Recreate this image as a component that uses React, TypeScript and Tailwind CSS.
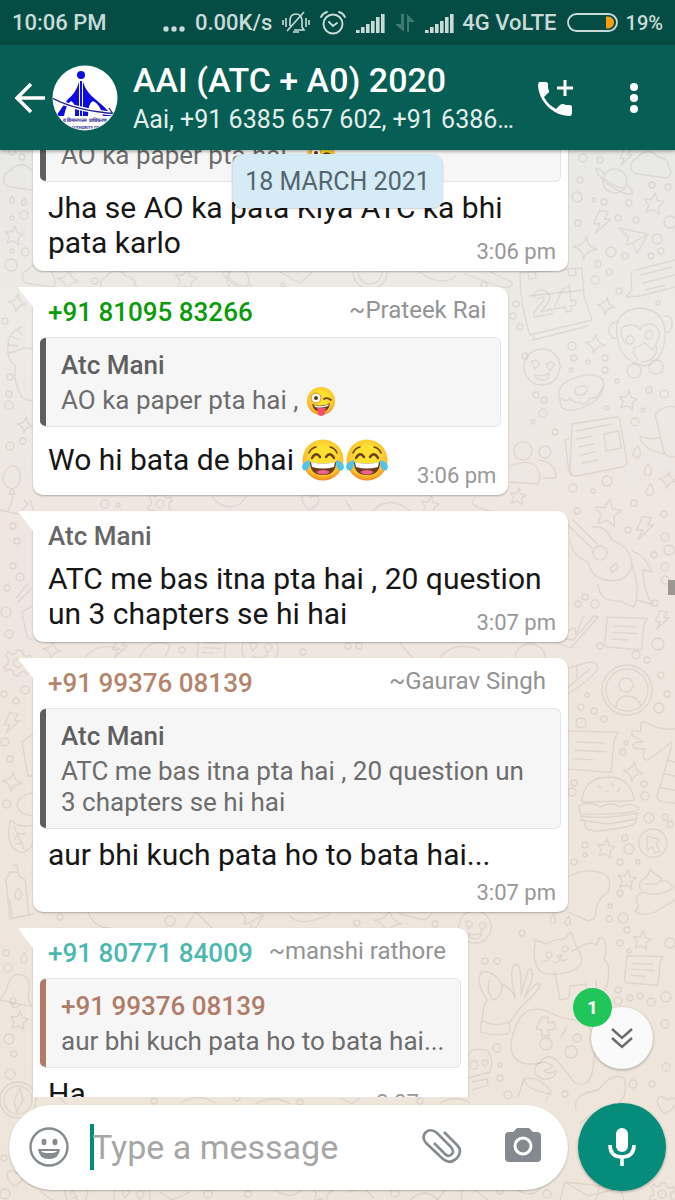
import React from 'react';

/* ─── Wallpaper ──────────────────────────────────────────────────────── */

type Spot = [x: number, y: number, scale: number, turn?: number];

const SHAPES = {
  star: 'M0-10L3-3L10-2.500L5 2.500L6.500 10L0 6.500L-6.500 10L-5 2.500L-10-2.500L-3-3Z',
  sparkle: 'M0-10Q1-1.500 10 0Q1 1.500 0 10Q-1 1.500-10 0Q-1-1.500 0-10Z',
  bolt: 'M-4-11L5-11L2-3L8-4L-5 12L-2 2L-8 3Z',
  cloud: 'M-13 9A7 7 0 0 1-13-4A10 10 0 0 1 4-7A8 8 0 0 1 14 0A5 5 0 0 1 13 9Z',
  note: 'M-18-12L18-16L16-10L17 13L-14 15Q-17 15-17 11ZM-11-5L9-7M-11 1L11-1M-11 7L3 6',
  planet: 'M-12 0A12 12 0 1 1 12 2A12 12 0 0 1-12 0ZM-11-5Q-21-12-20-7Q-14 3 2 9Q20 15 19 10Q19 7 12 3M-12-1Q-2 7 11 7',
  gear: 'M-3-14L3-14L4-10L8-8L12-11L15-6L11-3L11 3L15 6L12 11L8 8L4 10L3 14L-3 14L-4 10L-8 8L-12 11L-15 6L-11 3L-11-3L-15-6L-12-11L-8-8L-4-10ZM-5 0A5 5 0 1 0 5 0A5 5 0 1 0-5 0',
  heart: 'M0 9C-16-2-8-13 0-5C8-13 16-2 0 9Z',
  drop: 'M0-8Q7 2 3 6Q0 8-3 6Q-7 2 0-8Z',
  bell: 'M-14 10Q-8 4-8-4Q-6-14 2-13Q10-12 10-3Q9 6 14 12ZM-3 12Q0 18 4 12',
  plane: 'M-16-10L14-8L6 12L0 3L-6 6L-5-2ZM14-8L0 3',
  leaf: 'M-12-15Q0-8 12-14Q18 6 6 15Q-14 16-12-15ZM-7-9L6 12M-2-3L-5 3M-2-3L5-4M3 5L-3 8',
  smile: 'M-18 0A18 18 0 1 1 18 0A18 18 0 1 1-18 0M-11-4Q-6-8-3-3L-7 3ZM4-3Q8-9 12-4L8 3ZM-6 8Q0 11 8 5Q8 14 0 13Q-5 13-6 8Z',
};

const SPOTS: Record<keyof typeof SHAPES, Spot[]> = {
  star: [[654, 203, 1], [628, 400, 0.9], [608, 512, 1.3], [606, 848, 0.9], [627, 879, 0.9], [642, 940, 0.9], [14, 235, 0.9], [19, 1020, 0.9], [186, 279, 1.1], [518, 496, 0.8], [430, 505, 0.9], [322, 1192, 1]],
  sparkle: [[585, 248, 1.2], [606, 306, 0.9], [595, 344, 1], [633, 772, 1], [17, 303, 0.9], [12, 782, 1], [68, 280, 1.1], [388, 922, 1.4], [668, 480, 0.9], [25, 425, 0.8], [52, 650, 0.9]],
  bolt: [[602, 222, 1], [645, 528, 1], [662, 620, 0.8], [12, 723, 0.9], [626, 157, 0.7], [120, 648, 0.9]],
  cloud: [[652, 165, 1.2], [25, 178, 1.2], [40, 276, 1], [120, 283, 1.1]],
  note: [[625, 633, 1.1], [643, 970, 1], [212, 648, 0.8], [590, 751, 1.4]],
  planet: [[615, 180, 1], [238, 279, 0.9]],
  gear: [[18, 663, 0.9], [662, 1194, 0.8], [160, 504, 0.8]],
  heart: [[666, 1105, 1], [310, 502, 0.9], [15, 1178, 0.9]],
  drop: [[12, 200, 0.5], [24, 202, 0.5], [637, 452, 0.8], [648, 470, 0.8], [650, 490, 0.8], [553, 919, 0.6], [568, 921, 0.6], [24, 958, 0.7]],
  bell: [[17, 990, 1.2], [452, 1192, 1]],
  plane: [[633, 240, 1], [250, 920, 0.9]],
  leaf: [[20, 837, 1], [75, 1192, 0.9]],
  smile: [[542, 367, 1], [475, 927, 0.9], [260, 649, 1], [132, 1196, 1]],
};

// bubbles scattered between the doodles: x, y, r
const DOTS = [
  [583, 158, 4], [600, 160, 3], [580, 180, 3], [577, 197, 5], [604, 202, 3], [594, 200, 2], [629, 203, 3], [652, 185, 3], [668, 187, 3], [618, 218, 3],
  [636, 220, 3], [578, 223, 3], [670, 222, 6], [657, 239, 5], [661, 251, 3], [611, 252, 5], [625, 256, 3], [651, 256, 3], [598, 264, 3], [609, 272, 3],
  [595, 280, 4], [619, 291, 3], [658, 303, 2], [516, 304, 3], [513, 316, 3], [520, 327, 3], [572, 346, 4], [574, 358, 3], [588, 362, 2], [605, 370, 3],
  [605, 358, 3], [571, 370, 2], [617, 381, 2], [649, 390, 3], [664, 394, 4], [607, 408, 2], [643, 410, 2], [635, 422, 4], [536, 395, 3], [544, 400, 3],
  [543, 413, 4], [533, 422, 2], [555, 432, 3], [607, 481, 5], [573, 488, 4], [593, 491, 2], [525, 356, 3], [577, 511, 3], [634, 503, 3], [664, 514, 3],
  [628, 530, 3], [665, 537, 4], [669, 550, 5], [654, 555, 3], [665, 567, 4], [665, 580, 4], [578, 604, 3], [585, 597, 3], [595, 604, 4], [655, 603, 3],
  [600, 646, 3], [658, 644, 6], [636, 655, 4], [647, 660, 3], [661, 675, 3], [587, 695, 2], [581, 707, 3], [594, 711, 3], [581, 723, 5], [604, 719, 3],
  [659, 708, 5], [667, 694, 3], [623, 752, 3], [626, 743, 2], [644, 784, 3], [645, 796, 4], [574, 783, 3], [572, 792, 4], [649, 818, 5], [665, 817, 3],
  [670, 824, 3], [625, 838, 3], [585, 845, 3], [629, 849, 5], [574, 862, 3], [620, 862, 3], [585, 855, 2], [638, 862, 2], [620, 893, 3], [610, 906, 2],
  [609, 919, 3], [623, 918, 5], [627, 930, 3], [620, 943, 3], [522, 933, 3], [485, 961, 3], [497, 961, 3], [629, 951, 2], [670, 943, 5], [618, 990, 3],
  [618, 1001, 4], [630, 998, 3], [640, 996, 3], [651, 1002, 4], [666, 997, 5], [665, 1024, 4], [666, 1067, 4], [652, 1084, 3], [633, 1084, 4], [612, 1063, 2],
  [565, 1094, 3], [500, 1065, 2], [497, 1048, 4], [508, 1095, 4], [500, 1078, 3], [12, 152, 3], [22, 157, 3], [24, 215, 4], [12, 218, 2], [12, 251, 2],
  [25, 252, 4], [11, 265, 6], [5, 321, 3], [10, 377, 3], [9, 394, 3], [9, 405, 4], [10, 446, 4], [23, 441, 3], [13, 526, 3], [17, 541, 3],
  [13, 566, 3], [20, 577, 4], [7, 588, 3], [6, 612, 5], [9, 634, 4], [16, 701, 3], [25, 690, 4], [4, 694, 3], [5, 742, 4], [10, 759, 3],
  [7, 804, 4], [6, 953, 3], [8, 968, 4], [13, 1001, 3], [9, 1039, 5], [14, 1054, 3], [4, 1158, 3], [5, 1194, 5], [283, 285, 2], [95, 281, 3],
  [484, 285, 3], [105, 504, 4], [118, 505, 2], [182, 650, 3], [303, 652, 3], [348, 646, 3], [359, 646, 3], [170, 921, 5], [60, 917, 3], [357, 923, 3],
  [435, 924, 3], [154, 1101, 3], [237, 1098, 3], [300, 1102, 3], [420, 1101, 3], [208, 1194, 4], [547, 1194, 4], [248, 1194, 3], [395, 1193, 4], [500, 1191, 3],
];

// larger one-off drawings, in page coordinates
const DRAWINGS = [
  // calendar
  'M520 273L582 268L584 296L592 320L530 335Q520 305 520 273ZM528 272L529 279L536 278L535 270M568 269L569 276L576 275L575 268M529 296L584 290M533 340L588 326M533 335L534 340',
  'M533 297Q535 289 543 290Q552 293 549 301L541 312L552 309L552 314L534 317L534 312L544 300Q544 294 539 299ZM562 290L569 285L571 301L576 300L576 305L571 306L571 311L566 312L565 307L554 309Z',
  // lined message
  'M675 260L636 270Q630 272 631 278L632 290L626 297L640 296L675 287M641 275L672 267M643 283L675 275M645 290L665 285',
  // monkey
  'M617 336Q613 310 640 308Q667 310 665 338Q663 362 645 366Q620 362 617 336ZM617 322Q608 323 609 332Q611 340 618 338M664 316Q673 315 672 325Q670 334 665 332M625 343Q614 325 632 325Q638 325 640 330Q643 322 654 325Q664 332 655 345M638 360Q630 350 636 347L645 343L652 350Q660 340 655 355Q650 362 642 362',
  'M630 336a4 4 0 1 0 0.100 0M649 331a4 4 0 1 0 0.100 0M634 364a7 7 0 1 0 0.100 0M656 360a7 7 0 1 0 0.100 0',
  // donut
  'M559 398Q556 384 575 378Q595 371 603 380Q607 392 592 403Q573 414 562 408ZM575 392Q575 385 586 386Q590 392 582 395Q576 396 575 392ZM561 398Q566 403 570 398Q575 404 579 402Q585 408 590 398Q598 400 603 386',
  // newspaper
  'M572 424L616 417Q620 417 620 421L627 462Q627 466 622 467L577 476Q571 476 570 470ZM571 438L565 440L569 472Q571 477 577 476M576 431L612 424M577 439L592 436M579 447L594 444M580 455L595 452M582 463L597 460M604 434L619 431L621 448L606 451Z',
  // mug
  'M655 414Q665 404 675 407M655 414L664 452Q668 458 675 457M659 438Q648 440 640 436Q640 448 664 454',
  // people
  'M515 455a9 9 0 1 1 16 0a9 9 0 0 1-16 0M539 452a6 6 0 1 1 12 0a6 6 0 0 1-12 0M510 466Q538 455 540 478L538 484L510 482M539 460Q556 462 556 478L543 478',
  // guitar
  'M568 525L592 548M573 520L597 544M592 527Q606 525 612 540Q632 548 632 566Q626 584 606 580Q592 578 588 562Q572 556 570 540M600 546a7 7 0 1 0 0.100 0M610 568L616 563L618 567L612 573ZM632 551Q646 556 652 572L643 570Q643 590 652 604L636 600L634 607L620 601Q600 602 598 585M632 566Q640 585 636 600',
  // ticks and pizza
  'M556 643L571 648L598 617L594 616L573 640L562 638M568 631L575 628L576 634L584 616M568 694Q592 679 598 668Q597 661 589 662L568 668M568 687L590 669M577 665L577 678',
  // avatar
  'M602 690a25 25 0 1 1 50 0a25 25 0 0 1-50 0M606 690a21 21 0 1 1 42 0a21 21 0 0 1-42 0M619 685a7 7 0 1 1 14 0a7 7 0 0 1-14 0M616 707Q618 695 628 696Q638 697 641 706',
  // hand
  'M675 729Q660 731 645 722Q639 720 641 732Q630 728 632 735L643 742Q630 742 634 748L645 749Q640 760 648 760L672 742',
  // lighthouse
  'M672 745L657 797Q656 802 675 803M667 760L675 762M664 774L675 776M661 788L675 790',
  // burger
  'M582 802Q583 777 610 777Q630 778 634 799Q634 801 628 801ZM579 806Q590 800 600 807Q612 801 620 807Q632 801 639 809Q630 815 580 814ZM581 816Q600 820 638 813L636 819L608 824L581 820ZM585 821Q583 832 600 831L626 827Q638 824 636 818M598 786L601 788M611 783L613 786M620 789L617 792M606 791L609 792',
  // pointer badge
  'M639 843a14 14 0 1 1 28 0a14 14 0 0 1-28 0M647 836L660 840L656 844L660 851L655 853L652 847L647 850Z',
  // swirl
  'M568 877Q588 866 606 875Q612 882 608 892Q595 900 596 915Q592 925 580 917L568 912M650 869Q648 878 642 880Q636 886 643 892Q634 895 637 902Q640 908 635 911Q640 917 655 912L675 900M646 884Q660 886 662 878Q656 876 650 869M643 892Q660 898 673 888Q670 880 662 881',
  // cat
  'M535 944L534 940Q536 940 546 944Q557 938 564 939L571 932L576 946Q588 964 574 970Q552 978 540 971Q532 962 535 944ZM549 952a3 3 0 1 0 0.100 0M565 946a3 3 0 1 0 0.100 0M557 956L562 955L560 959ZM560 959Q562 963 567 959M560 959Q557 965 552 962M542 962L548 960M572 951L578 948M578 948Q590 940 596 945Q602 936 598 938Q606 935 606 952Q602 960 608 964Q610 980 605 990M555 973Q558 988 560 1000L569 998L570 986L586 984L589 997L597 996L596 980',
  // ok hand
  'M482 1022Q483 1005 487 1000Q474 980 482 972Q493 970 502 984Q502 998 493 1000Q485 990 490 980M502 984Q514 990 515 998M515 996Q508 968 516 964Q522 964 521 995M521 995L528 970Q534 966 532 980L524 998M524 998Q536 980 540 985Q538 992 520 1008L510 1022M482 1020Q494 1028 509 1022Q512 1030 507 1034Q493 1036 481 1032Q480 1025 482 1020Z',
  // controller
  'M520 1018Q530 1005 547 1011Q562 1020 580 1020Q598 1030 594 1060Q592 1092 574 1082L560 1064Q548 1050 540 1063Q516 1068 511 1050Q510 1036 520 1018ZM538 1024L542 1017L548 1017L548 1023L554 1022L555 1029L548 1030L549 1036L542 1036L542 1030L536 1029ZM546 1038a6 6 0 1 0 0.100 0M571 1046a6 6 0 1 0 0.100 0M561 1038L567 1026M577 1034a4 4 0 1 0 0.100 0',
  // glass, robot
  'M524 1079L518 1097M524 1079Q538 1075 551 1091L546 1100M524 1079Q526 1090 551 1094M535 1074Q533 1062 545 1062L553 1066Q548 1070 544 1071Q550 1076 556 1070Q556 1080 542 1079ZM468 1055Q474 1046 488 1051Q494 1060 490 1072L468 1078M474 1061a4 4 0 1 0 0.100 0M485 1060a3 3 0 1 0 0.100 0M472 1082L487 1079L488 1085L472 1090',
  // boomerang blob by the mic
  'M576 1110Q572 1094 598 1090Q612 1072 624 1078Q630 1098 612 1108Q590 1112 580 1124M565 1182L600 1186L596 1200M565 1182L560 1200M565 1182L588 1196L620 1188L624 1200',
  // croissant, balloon
  'M22 327Q8 332 8 345Q6 360 16 366Q12 380 22 397Q30 402 33 400M8 345L18 346M10 336L20 340M16 329L23 335M8 353L17 351M15 352Q28 345 33 350M12 466Q2 470 3 480Q6 488 12 489L9 494L15 494L13 489Q22 484 20 474Q18 466 12 466ZM12 494Q14 500 8 510',
  // pencil, bag, bottle
  'M16 598L28 584M18 602L32 588M22 612L33 606M22 612L27 638L33 640M22 742L33 734M22 742L28 776L33 776M17 805Q20 794 33 793M17 805Q18 814 33 816M10 872L18 872L19 876L25 880L29 915L10 919L6 880Q8 875 10 872ZM13 865L17 865L18 872M18 888Q25 895 18 900Q12 896 18 888M10 900L12 918L34 914',
  // compass
  'M0 1100a18 18 0 1 1 36 0a18 18 0 0 1-36 0M4 1100a14 14 0 1 1 28 0a14 14 0 0 1-28 0M20 1088L23 1100L17 1112L14 1101ZM5 1074a5 5 0 1 1 10 0a5 5 0 0 1-10 0M0 510L18 514L28 504L24 500M30 500L34 512',
  // strip fragments between the bubbles
  'M353 272a17 17 0 0 0 34 0M358 272a12 12 0 0 0 24 0M420 272Q440 288 456 276M465 274L500 287Q514 288 512 282L490 272M280 272L300 283L312 272M212 497Q225 512 240 504L246 497M345 500L352 511M372 511Q390 494 410 511M475 498Q465 505 490 511M85 657Q100 640 122 650M140 657Q150 636 170 645L165 657M400 643L412 657M440 657Q455 640 480 650M515 657a15 13 0 0 1 30 0M88 912Q94 928 110 928M185 928L196 912L212 928M290 916Q300 928 330 914M400 914L425 920L432 914M60 1098L66 1104M180 1103Q200 1092 215 1103M255 1104Q275 1094 290 1104M340 1098L352 1104L360 1098M440 1103Q455 1094 470 1103',
  'M40 1191L52 1200M160 1192L172 1200L190 1192M275 1190Q290 1200 300 1191M350 1192L362 1186L374 1198M410 1200Q425 1186 438 1200M475 1190L488 1200M515 1188Q530 1200 540 1188',
];

function Wallpaper() {
  return (
    <svg className="absolute inset-0 h-full w-full" viewBox="0 0 675 1200" preserveAspectRatio="xMidYMid slice" aria-hidden="true">
      <defs>
        <linearGradient id="paper" x1="0" y1="0" x2="0" y2="1">
          <stop offset="0.120" stopColor="#e9e9e5" />
          <stop offset="0.280" stopColor="#eeeae6" />
          <stop offset="0.450" stopColor="#efe6df" />
          <stop offset="1" stopColor="#eee5db" />
        </linearGradient>
      </defs>
      <rect width="675" height="1200" fill="url(#paper)" />
      <g fill="none" stroke="#8f8578" strokeOpacity="0.170" strokeWidth="1.300" strokeLinejoin="round" strokeLinecap="round">
        {DRAWINGS.map((d, i) => <path key={i} d={d} />)}
        {DOTS.map(([x, y, r], i) => <circle key={i} cx={x} cy={y} r={r} />)}
        {(Object.keys(SPOTS) as (keyof typeof SHAPES)[]).map(name =>
          SPOTS[name].map(([x, y, s, turn = 8], i) => (
            <path key={name + i} d={SHAPES[name]} strokeWidth={1.3 / s} transform={`translate(${x} ${y}) rotate(${turn}) scale(${s})`} />
          )),
        )}
      </g>
    </svg>
  );
}

/* ─── Emoji ──────────────────────────────────────────────────────────── */

function FaceFill() {
  return (
    <radialGradient id="face" cx="0.5" cy="0.4" r="0.6">
      <stop offset="0.4" stopColor="#fde030" />
      <stop offset="0.8" stopColor="#fbc02d" />
      <stop offset="1" stopColor="#f08b1d" />
    </radialGradient>
  );
}

function Joy() {
  return (
    <svg className="inline-block h-11 w-11 align-middle" viewBox="0 0 44 44" role="img" aria-label="face with tears of joy">
      <defs><FaceFill /></defs>
      <circle cx="22" cy="22" r="20.500" fill="url(#face)" />
      <path d="M8 15Q10 10 15 9M29 9Q34 10 36 15" fill="none" stroke="#6b4117" strokeWidth="1.500" strokeLinecap="round" />
      <path d="M11 20Q15 13 19 19M25 19Q29 13 33 20" fill="none" stroke="#6b4117" strokeWidth="2.400" strokeLinecap="round" />
      <path d="M9 24Q22 27 35 24Q35 37 22 37Q9 37 9 24Z" fill="#6b3a1a" />
      <path d="M10 24Q22 27 34 24L33 29Q22 32 11 29Z" fill="#fff" />
      <path d="M15 34Q22 30 29 34Q22 39 15 34Z" fill="#f06292" />
      <path d="M9 22Q1 24 1 29Q2 34 6 32Q9 30 9 22ZM35 22Q43 24 43 29Q42 34 38 32Q35 30 35 22Z" fill="#4fc3e8" />
    </svg>
  );
}

function Zany() {
  return (
    <svg className="-my-2 inline-block h-8 w-8 align-middle" viewBox="0 0 32 32" role="img" aria-label="winking face with tongue">
      <defs><FaceFill /></defs>
      <circle cx="16" cy="15" r="14" fill="url(#face)" />
      <circle cx="11" cy="12" r="5" fill="#fff" stroke="#d98c1c" />
      <circle cx="11" cy="12" r="2" fill="#5d3a1a" />
      <path d="M19 13Q22 11 26 14" fill="none" stroke="#6b4117" strokeWidth="1.800" strokeLinecap="round" />
      <path d="M7 18Q16 22 25 17Q24 26 16 26Q9 26 7 18Z" fill="#5d3a1a" />
      <path d="M9 19Q16 22 24 18L23 20Q16 23 10 21Z" fill="#fff" />
      <path d="M12 22Q16 21 21 22L20 27Q19 30 16 30Q13 30 13 27Z" fill="#f0506e" />
    </svg>
  );
}

/* ─── Status bar ─────────────────────────────────────────────────────── */

function Signal() {
  return (
    <svg className="h-5 w-[29px]" viewBox="0 0 29 20" fill="currentColor" aria-hidden="true">
      {[3, 6, 9, 12, 16, 19].map((h, i) => <rect key={i} x={i * 5} y={20 - h} width="3.600" height={h} />)}
    </svg>
  );
}

function StatusBar() {
  return (
    <div className="flex h-[45px] shrink-0 items-center bg-[#054d44] px-3 text-[22px] leading-6 font-medium whitespace-nowrap text-[#c9dbd8]">
      <span>10:06 PM</span>
      <span className="ml-auto flex items-center gap-[10px]">
        <svg className="h-6 w-[22px]" viewBox="0 0 22 24" fill="currentColor" aria-hidden="true">
          <circle cx="3" cy="18" r="2.700" /><circle cx="11" cy="18" r="2.700" /><circle cx="19" cy="18" r="2.700" />
        </svg>
        <span>0.00K/s</span>
        <svg className="h-6 w-7" viewBox="0 0 28 24" fill="none" stroke="currentColor" strokeWidth="1.600" aria-hidden="true">
          <path d="M12 19H22L20 16V9Q19 3 14 3Q8 3 8 10V15M11 21H17M22 1L5 20M1 9V14M4 7V16M24 7V16M27 9V14" />
        </svg>
        <svg className="h-6 w-[26px]" viewBox="0 0 26 24" fill="none" stroke="currentColor" strokeWidth="1.900" strokeLinecap="round" aria-hidden="true">
          <circle cx="13" cy="13" r="9.500" />
          <path d="M9 11L13 15L17 12M1 6Q3 2 7 1M25 6Q23 2 19 1" />
        </svg>
        <Signal />
        <svg className="h-5 w-5 text-[#3f7a71]" viewBox="0 0 20 20" fill="currentColor" aria-hidden="true">
          <path d="M6 1H9V19L0 11H6ZM12 19H14V9H20L12 1Z" />
        </svg>
        <Signal />
        <span className="-ml-0.5">4G VoLTE</span>
        <svg className="h-[19px] w-[51px]" viewBox="0 0 51 19" aria-hidden="true">
          <rect x="1" y="1" width="49" height="17" rx="8.500" fill="none" stroke="currentColor" strokeWidth="1.800" />
          <path d="M39 3.500H41A6 6 0 0 1 41 15.500H39Z" fill="#ff9a13" />
        </svg>
        <span className="-ml-0.5 text-[20px]">19%</span>
      </span>
    </div>
  );
}

/* ─── Header ─────────────────────────────────────────────────────────── */

function GroupLogo() {
  return (
    <svg className="h-[66px] w-[66px] shrink-0" viewBox="0 0 66 66" role="img" aria-label="Group photo">
      <defs><clipPath id="round"><circle cx="33" cy="33" r="32" /></clipPath></defs>
      <circle cx="33" cy="33" r="32.500" fill="#fff" />
      <g clipPath="url(#round)">
        <g fill="#0d0de0">
          <circle cx="29" cy="10" r="4" />
          <path d="M27 17Q24 28 16 34L4 51H12Q14 40 19 36Q24 38 23 51H27ZM31 17Q34 27 43 34Q52 41 59 49L60 51H51Q48 39 41 36Q36 38 36 51H31Z" />
          <path d="M28 16H30V51H28Z" />
        </g>
        <path d="M0 33Q24 46 66 49" fill="none" stroke="#fff" strokeWidth="4" />
        <path d="M0 33Q24 46 66 49M57 43L61 49" fill="none" stroke="#22228c" strokeWidth="1.300" />
        <text x="33" y="57" textAnchor="middle" fontSize="5" fontWeight="700" fill="#22228c">य विमानपत्तन प्राधिकरण</text>
        <text x="33" y="64" textAnchor="middle" fontSize="4" fontWeight="700" fill="#22228c">AUTHORITY OF</text>
      </g>
    </svg>
  );
}

function ChatHeader() {
  return (
    <header className="relative z-20 flex h-[105px] shrink-0 items-center bg-[#075e54] pr-4 text-white shadow-[0_1px_4px_rgba(0,0,0,0.4)]">
      <button type="button" aria-label="Back" className="flex shrink-0 items-center pl-[15px]">
        <svg className="h-8 w-[37px]" viewBox="0 0 37 32" fill="none" stroke="currentColor" strokeWidth="3.600" aria-hidden="true">
          <path d="M30 16H3M16 2L2 16L16 30" />
        </svg>
        <GroupLogo />
      </button>
      <div className="ml-[15px] min-w-0 flex-1">
        <h1 className="truncate text-[34px] leading-11 font-medium">AAI (ATC + A0) 2020</h1>
        <p className="truncate text-[25px] leading-9 text-[#e3efed]">Aai, +91 6385 657 602, +91 6386…</p>
      </div>
      <button type="button" aria-label="Group call" className="mr-[34px] ml-4 shrink-0">
        <svg className="h-10 w-10" viewBox="0 0 40 40" fill="currentColor" aria-hidden="true">
          <path d="M4 6C3 5 3 4 5 4H11C12 4 13 5 13 6C13 9 13 11 14 13C14 14 14 15 13 15L9 19C12 25 16 28 21 31L25 27C26 26 27 26 28 26C30 27 32 27 35 27C36 27 37 28 37 29V35C37 36 36 38 35 38C18 38 3 23 3 6Z" />
          <path d="M30 2V18M22 10H38" stroke="currentColor" strokeWidth="3" fill="none" />
        </svg>
      </button>
      <button type="button" aria-label="More options" className="shrink-0 px-5">
        <svg className="h-8 w-[10px]" viewBox="0 0 10 32" fill="currentColor" aria-hidden="true">
          <circle cx="5" cy="5" r="4" /><circle cx="5" cy="16" r="4" /><circle cx="5" cy="27" r="4" />
        </svg>
      </button>
    </header>
  );
}

/* ─── Messages ───────────────────────────────────────────────────────── */

type QuoteProps = { name: string; nameClass?: string; barClass?: string; children: React.ReactNode };

function Quote({ name, nameClass = 'text-[#5f5f5f]', barClass = 'bg-[#5f5d5e]', children }: QuoteProps) {
  return (
    <blockquote className="-mx-2 mb-2 flex overflow-hidden rounded-md border border-l-0 border-[#e4e6e6] bg-[#f6f6f6]">
      <div className={`w-[6px] shrink-0 ${barClass}`} />
      <div className="min-w-0 flex-1 px-[15px] pt-[10px] pb-[10px]">
        <div className={`mb-[3px] text-[26px] leading-[34px] font-medium ${nameClass}`}>{name}</div>
        <div className="max-w-[480px] text-[26px] leading-[31px] text-[#6d6d6d]">{children}</div>
      </div>
    </blockquote>
  );
}

type MessageProps = {
  from: string;
  fromClass: string;
  nick?: string;
  time: string;
  timeBelow?: boolean;
  fit?: boolean;
  quote?: React.ReactNode;
  children: React.ReactNode;
};

function Message({ from, fromClass, nick, time, timeBelow, fit, quote, children }: MessageProps) {
  return (
    <li className={`relative max-w-[535px] rounded-[10px] rounded-tl-none bg-white px-[15px] pt-2 pb-[11px] shadow-[0_1px_2px_rgba(0,0,0,0.28)] ${fit ? 'w-fit' : 'w-full'}`}>
      <svg className="absolute top-0 right-full h-5 w-[15px]" viewBox="0 0 15 20" aria-hidden="true">
        <path d="M15 0H2Q0 0 1 2L15 20Z" fill="#fff" />
      </svg>
      <div className="mb-2 flex h-[34px] items-center justify-between gap-4 pr-[7px]">
        <span className={`text-[26px] leading-[34px] font-medium ${fromClass}`}>{from}</span>
        {nick && <span className="mb-1 text-[24px] leading-7 text-[#939393]">~{nick}</span>}
      </div>
      {quote}
      <div className="-mb-[5px] grid">
        <p className={`col-start-1 row-start-1 text-[30px] leading-[35px] text-[#161616] ${timeBelow ? 'mb-[34px]' : 'mb-[5px]'} ${fit ? 'pr-[104px]' : ''}`}>{children}</p>
        <time className="col-start-1 row-start-1 -mr-[3px] self-end justify-self-end text-[22px] leading-[26px] text-[#989898]">{time}</time>
      </div>
    </li>
  );
}

/* ─── Composer ───────────────────────────────────────────────────────── */

function Composer() {
  return (
    <form className="relative z-10 flex shrink-0 items-center gap-[10px] px-[9px] pt-[6px] pb-[9px]" onSubmit={e => e.preventDefault()}>
      <div className="flex h-[85px] min-w-0 flex-1 items-center rounded-full bg-white pr-[26px] pl-5 shadow-[0_1px_2px_rgba(0,0,0,0.25)]">
        <button type="button" aria-label="Emoji" className="mr-[21px] shrink-0">
          <svg className="h-10 w-10" viewBox="0 0 40 40" fill="#858a90" aria-hidden="true">
            <circle cx="20" cy="20" r="18.500" fill="none" stroke="#858a90" strokeWidth="2.400" />
            <ellipse cx="15" cy="15" rx="2.500" ry="3.200" /><ellipse cx="26" cy="15" rx="2.500" ry="3.200" />
            <path d="M9 22H31Q30 32 20 32Q10 32 9 22ZM12 24Q13 26 20 26Q27 26 28 24Z" fillRule="evenodd" />
          </svg>
        </button>
        <span className="h-[46px] w-1 shrink-0 bg-[#068b7a]" />
        <input
          type="text"
          aria-label="Type a message"
          placeholder="Type a message"
          className="-ml-0.5 min-w-0 flex-1 bg-transparent text-[34px] leading-10 text-[#161616] outline-none placeholder:text-[#a6a6a6]"
        />
        <button type="button" aria-label="Attach" className="mr-10 shrink-0">
          <svg className="h-10 w-11" viewBox="0 0 44 40" fill="none" stroke="#858a90" strokeWidth="2.600" aria-hidden="true">
            <path d="M24 5L37 18Q43 24 37 31Q30 38 23 32L6 16Q1 10 6 5Q11 1 17 6L31 20Q35 25 31 28Q28 30 25 27L14 16" />
          </svg>
        </button>
        <button type="button" aria-label="Camera" className="shrink-0">
          <svg className="h-10 w-[38px]" viewBox="0 0 38 40" fill="#858a90" aria-hidden="true">
            <path d="M13 1H25L29 5H33Q37 5 37 9V31Q37 35 33 35H5Q1 35 1 31V9Q1 5 5 5H9Z" />
            <circle cx="19" cy="19" r="8" fill="none" stroke="#fff" strokeWidth="3" />
          </svg>
        </button>
      </div>
      <button type="button" aria-label="Voice message" className="flex h-22 w-22 shrink-0 items-center justify-center rounded-full bg-[#058c7b] text-white shadow-[0_1px_3px_rgba(0,0,0,0.3)]">
        <svg className="h-10 w-7" viewBox="0 0 28 40" fill="none" stroke="currentColor" strokeWidth="3.600" aria-hidden="true">
          <rect x="8" y="1" width="12" height="24" rx="6" fill="currentColor" stroke="none" />
          <path d="M2 18Q2 30 14 30Q26 30 26 18M14 30V39" />
        </svg>
      </button>
    </form>
  );
}

export default function App() {
  const paper = <Quote name="Atc Mani">AO ka paper pta hai , <Zany /></Quote>;

  return (
    <div className="relative flex h-screen flex-col overflow-hidden font-['Roboto',sans-serif]">
      <Wallpaper />
      <div className="relative z-20"><StatusBar /></div>
      <ChatHeader />

      <main className="relative min-h-0 flex-1">
        <ul className="-mt-[108px] flex h-[calc(100%+108px)] flex-col items-start gap-4 overflow-hidden pr-6 pl-[33px] *:shrink-0">
          <Message from="+91 81095 83266" fromClass="text-[#0a9a0a]" time="3:06 pm" quote={paper}>
            Jha se AO ka pata Kiya ATC ka bhi pata karlo
          </Message>
          <Message from="+91 81095 83266" fromClass="text-[#0a9a0a]" nick="Prateek Rai" time="3:06 pm" fit quote={paper}>
            <span className="flex h-[49px] items-center whitespace-pre">Wo hi bata de bhai <Joy /><Joy /></span>
          </Message>
          <Message from="Atc Mani" fromClass="text-[#666666]" time="3:07 pm">
            ATC me bas itna pta hai , 20 question un 3 chapters se hi hai
          </Message>
          <Message
            from="+91 99376 08139"
            fromClass="text-[#b5846c]"
            nick="Gaurav Singh"
            time="3:07 pm"
            timeBelow
            quote={<Quote name="Atc Mani">ATC me bas itna pta hai , 20 question un 3 chapters se hi hai</Quote>}
          >
            aur bhi kuch pata ho to bata hai...
          </Message>
          <Message
            from="+91 80771 84009"
            fromClass="text-[#4db8b0]"
            nick="manshi rathore"
            time="3:07 pm"
            fit
            quote={<Quote name="+91 99376 08139" nameClass="text-[#b07c68]" barClass="bg-[#b07c68]">aur bhi kuch pata ho to bata hai...</Quote>}
          >
            Ha
          </Message>
        </ul>

        {/* sticky date */}
        <div className="absolute top-1 left-1/2 -translate-x-1/2 rounded-[10px] bg-[#d5ebf6] px-[13px] pt-[10px] pb-2 text-[25px] leading-9 whitespace-nowrap text-[#54656f] shadow-[0_1px_2px_rgba(0,0,0,0.2)]">
          18 MARCH 2021
        </div>

        {/* scroll thumb */}
        <div className="absolute top-[430px] right-0 h-[15px] w-[7px] bg-[#9c9790]" />

        <button type="button" aria-label="Scroll to latest, 1 unread message" className="absolute right-[22px] bottom-7 flex h-[62px] w-[62px] items-center justify-center rounded-full bg-[#fafafa] shadow-[0_1px_3px_rgba(0,0,0,0.3)]">
          <svg className="h-6 w-6" viewBox="0 0 24 24" fill="none" stroke="#6a6a6a" strokeWidth="2.400" aria-hidden="true">
            <path d="M2 3L12 12L22 3M2 12L12 21L22 12" />
          </svg>
          <span className="absolute -top-[19px] -left-[18px] flex h-[39px] w-[39px] items-center justify-center rounded-full bg-[#20c659] text-[19px] leading-6 font-bold text-white">1</span>
        </button>
      </main>

      <Composer />
    </div>
  );
}
